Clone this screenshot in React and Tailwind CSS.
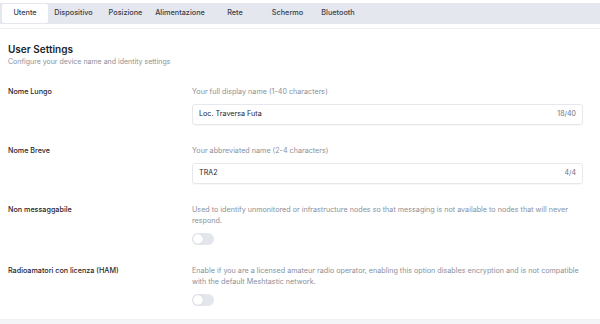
import React from "react";

const tabs = [
  { name: "Utente", w: "w-[46px]", active: true },
  { name: "Dispositivo", w: "w-[51px]" },
  { name: "Posizione", w: "w-[53px]" },
  { name: "Alimentazione", w: "w-[56px]" },
  { name: "Rete", w: "w-[54px]" },
  { name: "Schermo", w: "w-[51px]" },
  { name: "Bluetooth", w: "w-[50px]" },
];

function Toggle() {
  return (
    <div className="w-[22px] h-[12px] rounded-full bg-[#e3e6ec] flex items-center px-[1px]">
      <div className="w-[10px] h-[10px] rounded-full bg-white shadow-[0_0_1px_rgba(0,0,0,0.25)]" />
    </div>
  );
}

function Row({ label, desc, children }) {
  return (
    <div className="grid grid-cols-[184px_1fr]">
      <div className="text-[7.2px] leading-[11px] font-medium text-[#1f2430]">{label}</div>
      <div className="flex flex-col gap-[7px]">
        <div className="text-[7.2px] leading-[11px] text-[#8a8f99]">{desc}</div>
        {children}
      </div>
    </div>
  );
}

function Input({ value, count }) {
  return (
    <div className="h-[21px] border border-[#e6e8ec] rounded-[3px] bg-white flex items-center justify-between px-[6px] shadow-[0_1px_1px_rgba(0,0,0,0.03)]">
      <span className="text-[7.2px] text-[#1f2430]">{value}</span>
      <span className="text-[7px] text-[#6b7080]">{count}</span>
    </div>
  );
}

export default function App() {
  return (
    <div className="w-[600px] h-[324px] bg-white overflow-hidden flex flex-col" style={{ fontFamily: "Inter, 'Noto Sans', sans-serif" }}>
      <div className="pt-[3px]">
        <div className="h-[21px] bg-[#e4e7ee] flex items-center px-[2px]">
          {tabs.map((t) => (
            <div
              key={t.name}
              className={`${t.w} h-[19px] flex items-center justify-center text-[7.3px] font-medium text-[#3a3f4b] ${t.active ? "bg-white rounded-[2px]" : ""}`}
            >
              {t.name}
            </div>
          ))}
        </div>
      </div>
      <div className="mt-[4px] h-[292px] border-t border-b border-[#f0f1f3] pl-[8px] pr-[17px] pt-[13px]">
        <div className="text-[10px] leading-[14px] font-semibold text-[#1a1f2b]">User Settings</div>
        <div className="text-[7px] leading-[10px] text-[#8a8f99] mt-[1px]">Configure your device name and identity settings</div>
        <div className="flex flex-col gap-[20px] mt-[19px]">
          <Row label="Nome Lungo" desc="Your full display name (1-40 characters)">
            <Input value="Loc. Traversa Futa" count="18/40" />
          </Row>
          <Row label="Nome Breve" desc="Your abbreviated name (2-4 characters)">
            <Input value="TRA2" count="4/4" />
          </Row>
          <Row
            label="Non messaggabile"
            desc="Used to identify unmonitored or infrastructure nodes so that messaging is not available to nodes that will never respond."
          >
            <Toggle />
          </Row>
          <Row
            label="Radioamatori con licenza (HAM)"
            desc="Enable if you are a licensed amateur radio operator, enabling this option disables encryption and is not compatible with the default Meshtastic network."
          >
            <Toggle />
          </Row>
        </div>
      </div>
      <div className="flex-1 bg-[#f4f5f7]" />
    </div>
  );
}
